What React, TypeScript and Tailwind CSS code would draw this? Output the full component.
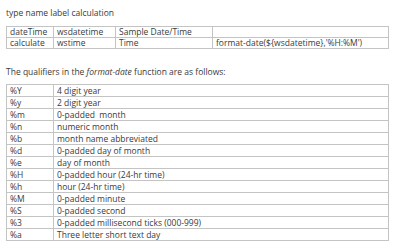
const qualifiers: [string, string][] = [
  ['%Y', '4 digit year'],
  ['%y', '2 digit year'],
  ['%m', '0-padded  month'],
  ['%n', 'numeric month'],
  ['%b', 'month name abbreviated'],
  ['%d', '0-padded day of month'],
  ['%e', 'day of month'],
  ['%H', '0-padded hour (24-hr time)'],
  ['%h', 'hour (24-hr time)'],
  ['%M', '0-padded minute'],
  ['%S', '0-padded second'],
  ['%3', '0-padded millisecond ticks (000-999)'],
  ['%a', 'Three letter short text day'],
]

const cell = 'border border-[#c4c4c4] px-[3px] py-0 text-left align-middle font-normal whitespace-pre'

export default function App() {
  return (
    <div className="w-[400px] h-[248px] overflow-hidden bg-white pl-[6px] pr-[11px] pt-[8px] text-[8.5px] leading-[10px] text-[#3a3a3a] font-['Open_Sans',sans-serif]">
      <p className="h-[10px]">type name label calculation</p>

      <table className="mt-[8px] w-[383px] border-collapse table-fixed">
        <colgroup>
          <col className="w-[47px]" />
          <col className="w-[62px]" />
          <col className="w-[97px]" />
          <col />
        </colgroup>
        <tbody>
          <tr className="h-[11px]">
            <td className={cell}>dateTime</td>
            <td className={cell}>wsdatetime</td>
            <td className={cell}>Sample Date/Time</td>
            <td className={cell}></td>
          </tr>
          <tr className="h-[11px]">
            <td className={cell}>calculate</td>
            <td className={cell}>wstime</td>
            <td className={cell}>Time</td>
            <td className={cell}>format-date(${'{'}wsdatetime{'}'},'%H:%M')</td>
          </tr>
        </tbody>
      </table>

      <p className="mt-[18px] h-[10px]">
        The qualifiers in the <em>format-date</em> function are as follows:
      </p>

      <table className="mt-[7px] w-[383px] border-collapse table-fixed">
        <colgroup>
          <col className="w-[47px]" />
          <col />
        </colgroup>
        <tbody>
          {qualifiers.map(([code, desc]) => (
            <tr key={code} className="h-[12px]">
              <td className={cell}>{code}</td>
              <td className={cell}>{desc}</td>
            </tr>
          ))}
        </tbody>
      </table>
    </div>
  )
}
